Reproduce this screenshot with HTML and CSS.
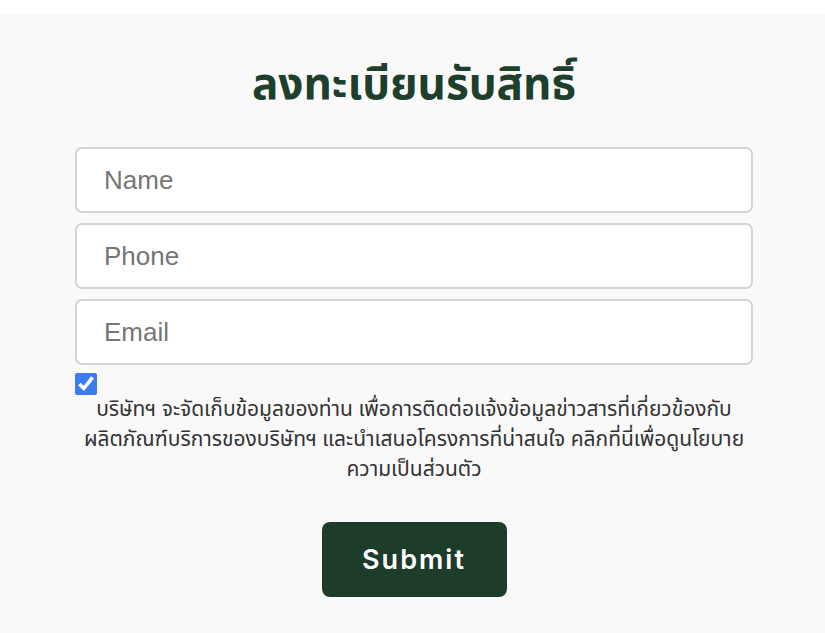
FILE: index.html
```html
<!DOCTYPE html>
<html lang="th">
<head>
    <meta charset="UTF-8">
    <meta name="viewport" content="width=device-width, initial-scale=1.0">
    <title>ลงทะเบียนรับสิทธิ์</title>
    <link rel="stylesheet" href="styles.css">
</head>
<body>
    <div class="top-strip"></div>

    <main class="register">
        <h1 class="register-title">ลงทะเบียนรับสิทธิ์</h1>

        <form class="register-form" onsubmit="return false;">
            <input class="field" type="text" placeholder="Name">
            <input class="field" type="tel" placeholder="Phone">
            <input class="field" type="email" placeholder="Email">

            <div class="consent">
                <input class="consent-check" type="checkbox" checked>
                <p class="consent-text">บริษัทฯ จะจัดเก็บข้อมูลของท่าน เพื่อการติดต่อแจ้งข้อมูลข่าวสารที่เกี่ยวข้องกับ<br>ผลิตภัณฑ์บริการของบริษัทฯ และนำเสนอโครงการที่น่าสนใจ คลิกที่นี่เพื่อดูนโยบาย<br>ความเป็นส่วนตัว</p>
            </div>

            <div class="actions">
                <button class="submit-btn" type="submit">Submit</button>
            </div>
        </form>
    </main>
</body>
</html>
```

FILE: styles.css
```css
body {
    margin: 0;
    padding: 0;
    background-color: #f9f9f9;
    font-family: 'Noto Sans Thai', 'Liberation Sans', sans-serif;
    color: #333;
}

.top-strip {
    height: 15px;
    background-color: #fff;
}

.register {
    padding: 40px 72px 30px 75px;
}

.register-title {
    margin: 0 0 30px;
    text-align: center;
    font-size: 44px;
    line-height: 62px;
    font-weight: 700;
    color: #1d3f2b;
}

.register-form {
    display: flex;
    flex-direction: column;
    gap: 10px;
}

.field {
    box-sizing: border-box;
    height: 66px;
    width: 100%;
    padding: 0 27px;
    border: 2px solid #d4d4d4;
    border-radius: 7px;
    background-color: #fff;
    font-family: 'Liberation Sans', sans-serif;
    font-size: 26px;
    color: #333;
}

.field::placeholder {
    color: #767676;
}

.consent {
    margin-top: -2px;
}

.consent-check {
    display: block;
    width: 22px;
    height: 22px;
    margin: 0;
    accent-color: #3b7cf0;
}

.consent-text {
    margin: 0;
    text-align: center;
    font-size: 21px;
    line-height: 30px;
    white-space: nowrap;
    color: #333;
}

.actions {
    display: flex;
    justify-content: center;
    margin-top: 27px;
}

.submit-btn {
    width: 185px;
    height: 75px;
    border: none;
    border-radius: 8px;
    background-color: #1d3d2a;
    color: #fff;
    font-family: 'Inter', 'Liberation Sans', sans-serif;
    font-size: 27px;
    font-weight: 600;
    letter-spacing: 2px;
    cursor: pointer;
}
```
